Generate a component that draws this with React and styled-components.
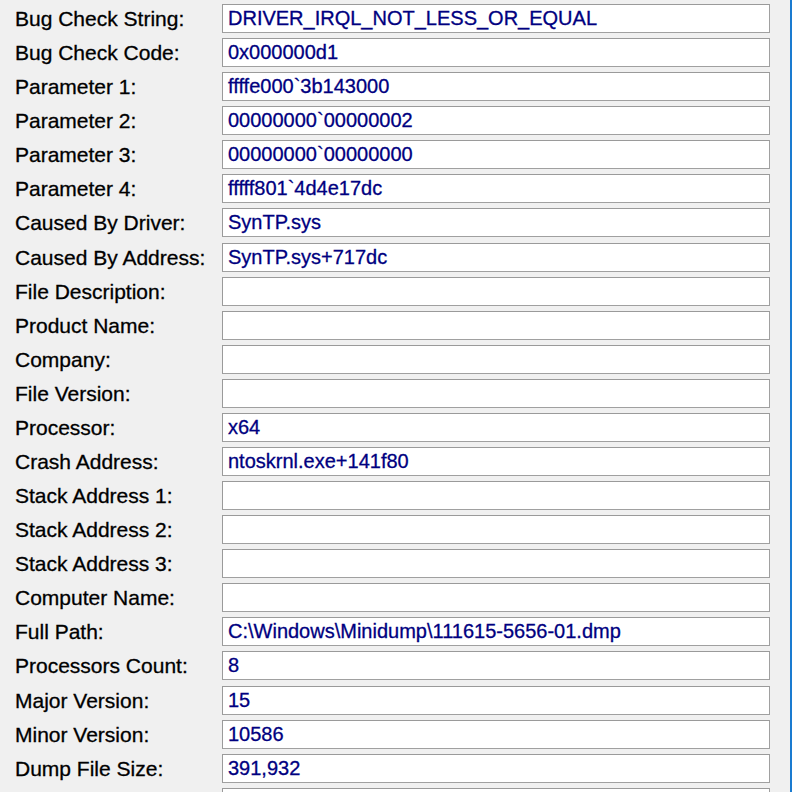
import React from 'react';
import styled, { createGlobalStyle } from 'styled-components';

const GlobalStyle = createGlobalStyle`
  html, body {
    margin: 0;
    padding: 0;
    background: #f0f0f0;
    overflow: hidden;
  }
`;

// report fields, top to bottom
const fields = [
  ['Bug Check String:', 'DRIVER_IRQL_NOT_LESS_OR_EQUAL'],
  ['Bug Check Code:', '0x000000d1'],
  ['Parameter 1:', 'ffffe000`3b143000'],
  ['Parameter 2:', '00000000`00000002'],
  ['Parameter 3:', '00000000`00000000'],
  ['Parameter 4:', 'fffff801`4d4e17dc'],
  ['Caused By Driver:', 'SynTP.sys'],
  ['Caused By Address:', 'SynTP.sys+717dc'],
  ['File Description:', ''],
  ['Product Name:', ''],
  ['Company:', ''],
  ['File Version:', ''],
  ['Processor:', 'x64'],
  ['Crash Address:', 'ntoskrnl.exe+141f80'],
  ['Stack Address 1:', ''],
  ['Stack Address 2:', ''],
  ['Stack Address 3:', ''],
  ['Computer Name:', ''],
  ['Full Path:', 'C:\\Windows\\Minidump\\111615-5656-01.dmp'],
  ['Processors Count:', '8'],
  ['Major Version:', '15'],
  ['Minor Version:', '10586'],
  ['Dump File Size:', '391,932'],
  ['', ''],
];

const App = () => {
  return (
    <>
      <GlobalStyle />
      <Window>
        <FieldList>
          {fields.map(([label, value], i) => (
            <Row key={i}>
              <Label>{label}</Label>
              <ValueBox>{value}</ValueBox>
            </Row>
          ))}
        </FieldList>
      </Window>
    </>
  );
};

const Window = styled.div`
  height: 792px;
  width: 792px;
  box-sizing: border-box;
  background: #f0f0f0;
  border-right: 2px solid #1a7bd0;
  overflow: hidden;
`;

const FieldList = styled.div`
  display: grid;
  grid-auto-rows: 34.09px;
`;

const Row = styled.div`
  display: flex;
  align-items: flex-start;
  padding-top: 4px;
`;

const Label = styled.div`
  width: 207px;
  padding-left: 15px;
  height: 29px;
  line-height: 29px;
  font-family: "Liberation Sans", Arial, sans-serif;
  font-size: 21px;
  color: #000;
  -webkit-text-stroke: 0.3px #000;
  white-space: nowrap;
`;

const ValueBox = styled.div`
  width: 548px;
  height: 29px;
  box-sizing: border-box;
  border: 1px solid #a0a0a0;
  border-top-color: #9a9a9a;
  border-left-color: #9a9a9a;
  background: #fff;
  padding-left: 5px;
  line-height: 27px;
  font-family: "Liberation Sans", Arial, sans-serif;
  font-size: 20px;
  color: #000080;
  -webkit-text-stroke: 0.3px #000080;
  white-space: nowrap;
  overflow: hidden;
`;

export default App;
